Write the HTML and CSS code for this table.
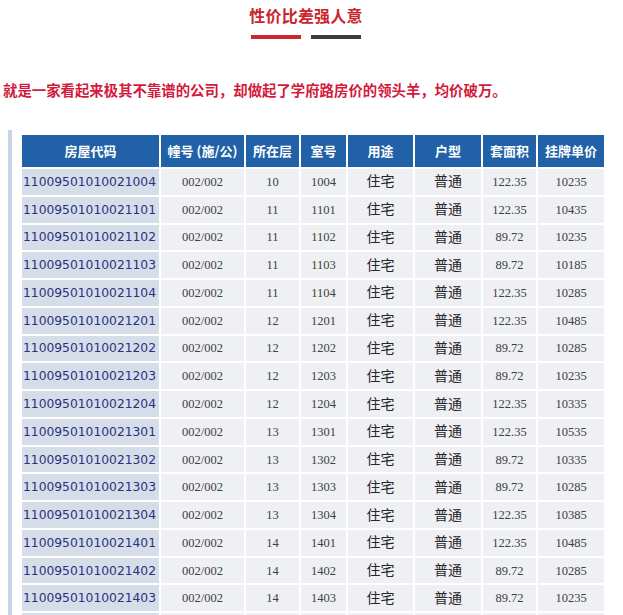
FILE: index.html
```html
<!DOCTYPE html>
<html lang="zh">
<head>
<meta charset="utf-8">
<title>性价比差强人意</title>
<link rel="stylesheet" href="styles.css">
</head>
<body>
<header class="head">
  <h1 class="title">性价比差强人意</h1>
  <div class="bars"><span class="bar bar-red"></span><span class="bar bar-dark"></span></div>
</header>
<p class="lead">就是一家看起来极其不靠谱的公司，却做起了学府路房价的领头羊，均价破万。</p>
<section class="panel">
<table class="grid">
  <colgroup>
    <col class="c1"><col class="c2"><col class="c3"><col class="c4"><col class="c5"><col class="c6"><col class="c7"><col class="c8">
  </colgroup>
  <thead>
    <tr><th>房屋代码</th><th>幢号 (施/公)</th><th>所在层</th><th>室号</th><th>用途</th><th>户型</th><th>套面积</th><th>挂牌单价</th></tr>
  </thead>
  <tbody>
    <tr><td class="code">11009501010021004</td><td class="num">002/002</td><td class="num">10</td><td class="num">1004</td><td class="cn">住宅</td><td class="cn">普通</td><td class="num">122.35</td><td class="num">10235</td></tr>
    <tr><td class="code">11009501010021101</td><td class="num">002/002</td><td class="num">11</td><td class="num">1101</td><td class="cn">住宅</td><td class="cn">普通</td><td class="num">122.35</td><td class="num">10435</td></tr>
    <tr><td class="code">11009501010021102</td><td class="num">002/002</td><td class="num">11</td><td class="num">1102</td><td class="cn">住宅</td><td class="cn">普通</td><td class="num">89.72</td><td class="num">10235</td></tr>
    <tr><td class="code">11009501010021103</td><td class="num">002/002</td><td class="num">11</td><td class="num">1103</td><td class="cn">住宅</td><td class="cn">普通</td><td class="num">89.72</td><td class="num">10185</td></tr>
    <tr><td class="code">11009501010021104</td><td class="num">002/002</td><td class="num">11</td><td class="num">1104</td><td class="cn">住宅</td><td class="cn">普通</td><td class="num">122.35</td><td class="num">10285</td></tr>
    <tr><td class="code">11009501010021201</td><td class="num">002/002</td><td class="num">12</td><td class="num">1201</td><td class="cn">住宅</td><td class="cn">普通</td><td class="num">122.35</td><td class="num">10485</td></tr>
    <tr><td class="code">11009501010021202</td><td class="num">002/002</td><td class="num">12</td><td class="num">1202</td><td class="cn">住宅</td><td class="cn">普通</td><td class="num">89.72</td><td class="num">10285</td></tr>
    <tr><td class="code">11009501010021203</td><td class="num">002/002</td><td class="num">12</td><td class="num">1203</td><td class="cn">住宅</td><td class="cn">普通</td><td class="num">89.72</td><td class="num">10235</td></tr>
    <tr><td class="code">11009501010021204</td><td class="num">002/002</td><td class="num">12</td><td class="num">1204</td><td class="cn">住宅</td><td class="cn">普通</td><td class="num">122.35</td><td class="num">10335</td></tr>
    <tr><td class="code">11009501010021301</td><td class="num">002/002</td><td class="num">13</td><td class="num">1301</td><td class="cn">住宅</td><td class="cn">普通</td><td class="num">122.35</td><td class="num">10535</td></tr>
    <tr><td class="code">11009501010021302</td><td class="num">002/002</td><td class="num">13</td><td class="num">1302</td><td class="cn">住宅</td><td class="cn">普通</td><td class="num">89.72</td><td class="num">10335</td></tr>
    <tr><td class="code">11009501010021303</td><td class="num">002/002</td><td class="num">13</td><td class="num">1303</td><td class="cn">住宅</td><td class="cn">普通</td><td class="num">89.72</td><td class="num">10285</td></tr>
    <tr><td class="code">11009501010021304</td><td class="num">002/002</td><td class="num">13</td><td class="num">1304</td><td class="cn">住宅</td><td class="cn">普通</td><td class="num">122.35</td><td class="num">10385</td></tr>
    <tr><td class="code">11009501010021401</td><td class="num">002/002</td><td class="num">14</td><td class="num">1401</td><td class="cn">住宅</td><td class="cn">普通</td><td class="num">122.35</td><td class="num">10485</td></tr>
    <tr><td class="code">11009501010021402</td><td class="num">002/002</td><td class="num">14</td><td class="num">1402</td><td class="cn">住宅</td><td class="cn">普通</td><td class="num">89.72</td><td class="num">10285</td></tr>
    <tr><td class="code">11009501010021403</td><td class="num">002/002</td><td class="num">14</td><td class="num">1403</td><td class="cn">住宅</td><td class="cn">普通</td><td class="num">89.72</td><td class="num">10235</td></tr>
    <tr class="tail"><td class="code"></td><td class="num"></td><td class="num"></td><td class="num"></td><td class="cn"></td><td class="cn"></td><td class="num"></td><td class="num"></td></tr>
  </tbody>
</table>
</section>
</body>
</html>
```

FILE: styles.css
```css
html, body {
  margin: 0;
  padding: 0;
  background: #ffffff;
}
body {
  font-family: "Noto Sans CJK SC", "Noto Sans", sans-serif;
  overflow: hidden;
  height: 615px;
}
.head {
  padding-top: 5px;
  padding-right: 11px;
  display: flex;
  flex-direction: column;
  align-items: center;
}
.title {
  margin: 0;
  font-size: 16px;
  line-height: 20px;
  font-weight: 700;
  color: #c8262c;
  letter-spacing: 0.2px;
}
.bars {
  display: flex;
  gap: 10px;
  margin-top: 10px;
}
.bar {
  display: block;
  width: 50px;
  height: 4px;
}
.bar-red { background: #c9292c; }
.bar-dark { background: #3b3b3b; }

.lead {
  margin: 43px 0 0 3px;
  font-size: 14.4px;
  line-height: 16px;
  font-weight: 700;
  color: #d31a3c;
  white-space: nowrap;
}

.panel {
  margin: 32px 0 0 8px;
  padding: 3px 0 0 8px;
  border-left: 4px solid #c6d4e4;
}
.grid {
  border-collapse: separate;
  border-spacing: 2px;
  table-layout: fixed;
  width: 586px;
}
.c1 { width: 137px; }
.c2 { width: 83px; }
.c3 { width: 53px; }
.c4 { width: 45px; }
.c5 { width: 65px; }
.c6 { width: 66px; }
.c7 { width: 53px; }
.c8 { width: 66px; }

.grid th {
  height: 31px;
  padding: 0 0 1px;
  background: #2161a7;
  color: #ffffff;
  font-size: 13px;
  line-height: 16px;
  font-weight: 700;
  text-align: center;
  vertical-align: middle;
  white-space: nowrap;
}
.grid td {
  height: 25.78px;
  padding: 0;
  background: #eff0f3;
  text-align: center;
  vertical-align: middle;
  white-space: nowrap;
  line-height: 16px;
}
.grid td.code {
  background: #d5dde9;
  text-align: left;
  padding-left: 1px;
  font-family: "DejaVu Sans", Verdana, sans-serif;
  font-size: 12.3px;
  color: #2b2f7e;
}
.grid td.num {
  font-family: "Liberation Serif", "Times New Roman", serif;
  font-variant-numeric: tabular-nums;
  font-size: 12.5px;
  color: #404040;
}
.grid td.cn {
  font-family: "Noto Sans CJK SC", sans-serif;
  font-size: 14px;
  color: #262626;
  padding-bottom: 3px;
  height: 22.78px;
}
```
